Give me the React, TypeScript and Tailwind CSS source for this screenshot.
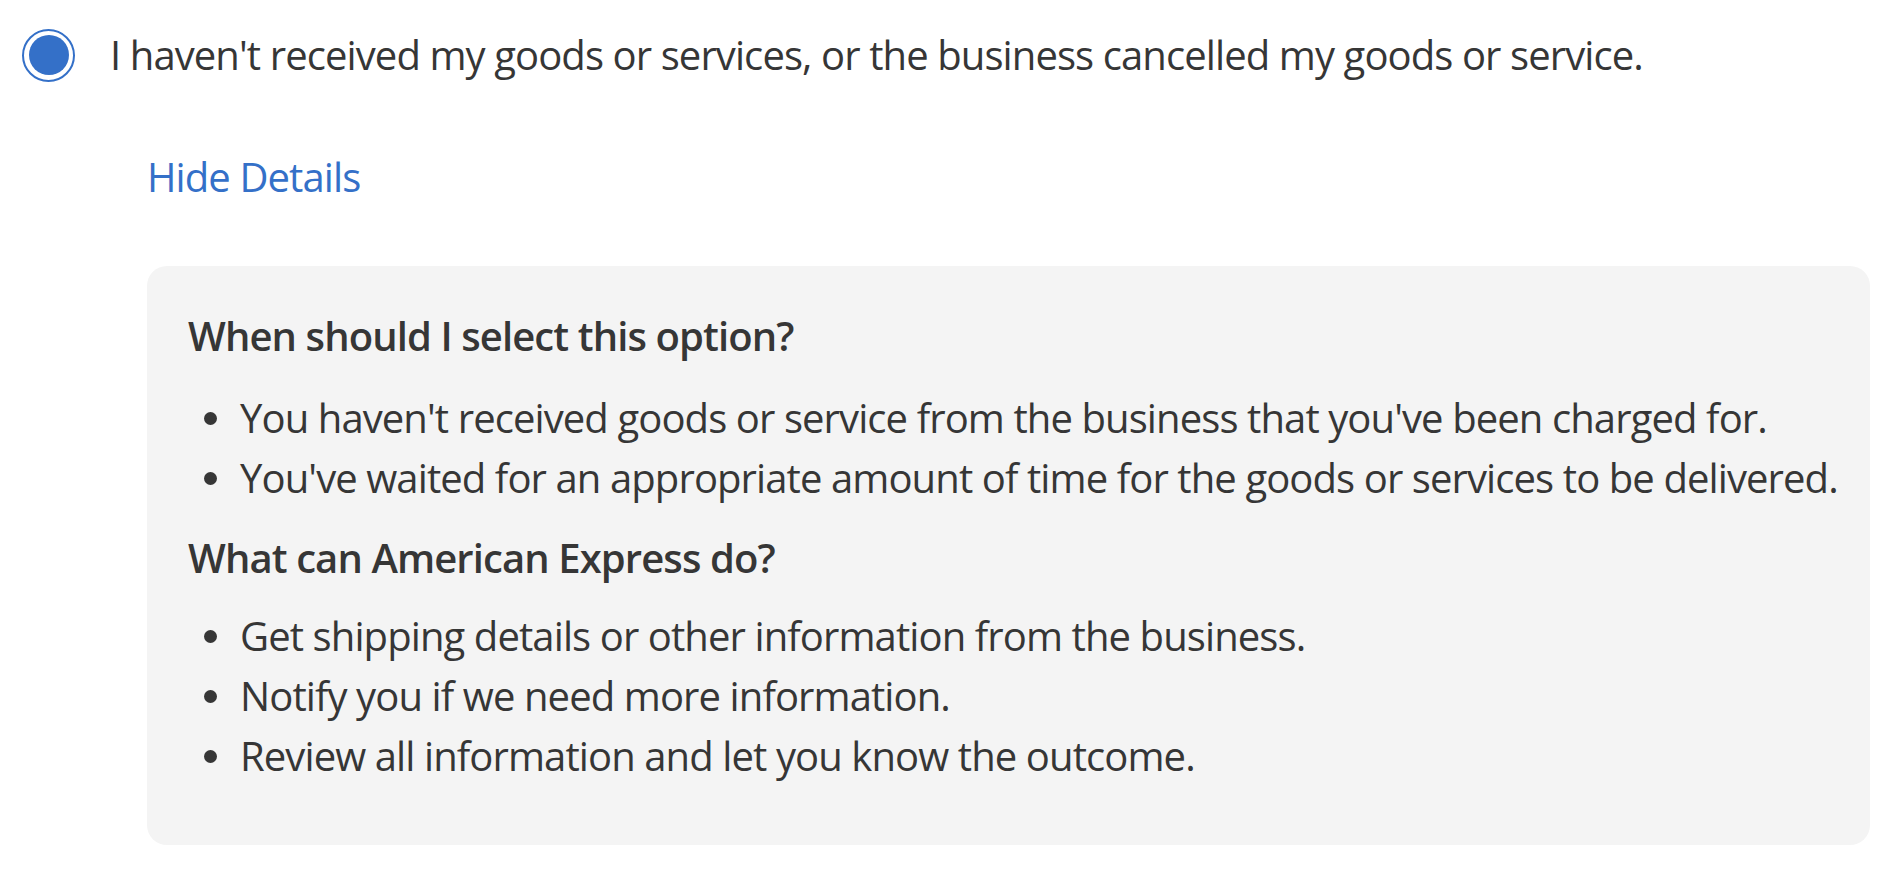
import React from "react";

export default function App() {
  const font = { fontFamily: '"Open Sans", "Noto Sans", sans-serif' };
  return (
    <div className="w-[1893px] h-[873px] bg-white text-[#363636] overflow-hidden" style={font}>
      <div className="flex items-center pl-[22px] pt-[25px]">
        <div className="w-[53px] h-[53px] rounded-full border-2 border-[#3470c8] flex items-center justify-center shrink-0">
          <div className="w-[40px] h-[40px] rounded-full bg-[#3470c8]" />
        </div>
        <div className="ml-[35px] text-[40px] leading-[60px] tracking-[-0.9px]">
          I haven't received my goods or services, or the business cancelled my goods or service.
        </div>
      </div>
      <div className="pl-[147px] mt-[62px]">
        <a className="text-[40px] leading-[60px] text-[#3470c8] tracking-[-0.9px]">Hide Details</a>
        <div className="mt-[59px] mr-[23px] bg-[#f4f4f4] rounded-[20px] pl-[41px] pr-[20px] pt-[40px] pb-[59px]">
          <div className="text-[40px] leading-[60px] font-semibold tracking-[-0.9px]">When should I select this option?</div>
          <ul className="mt-[22px] text-[40px] leading-[60px] tracking-[-0.9px]">
            <li className="flex items-center">
              <span className="w-[13px] h-[13px] rounded-full bg-[#363636] ml-[16px] mr-[23px] shrink-0" />
              You haven't received goods or service from the business that you've been charged for.
            </li>
            <li className="flex items-center">
              <span className="w-[13px] h-[13px] rounded-full bg-[#363636] ml-[16px] mr-[23px] shrink-0" />
              You've waited for an appropriate amount of time for the goods or services to be delivered.
            </li>
          </ul>
          <div className="mt-[20px] text-[40px] leading-[60px] font-semibold tracking-[-0.9px]">What can American Express do?</div>
          <ul className="mt-[18px] text-[40px] leading-[60px] tracking-[-0.9px]">
            <li className="flex items-center">
              <span className="w-[13px] h-[13px] rounded-full bg-[#363636] ml-[16px] mr-[23px] shrink-0" />
              Get shipping details or other information from the business.
            </li>
            <li className="flex items-center">
              <span className="w-[13px] h-[13px] rounded-full bg-[#363636] ml-[16px] mr-[23px] shrink-0" />
              Notify you if we need more information.
            </li>
            <li className="flex items-center">
              <span className="w-[13px] h-[13px] rounded-full bg-[#363636] ml-[16px] mr-[23px] shrink-0" />
              Review all information and let you know the outcome.
            </li>
          </ul>
        </div>
      </div>
    </div>
  );
}
